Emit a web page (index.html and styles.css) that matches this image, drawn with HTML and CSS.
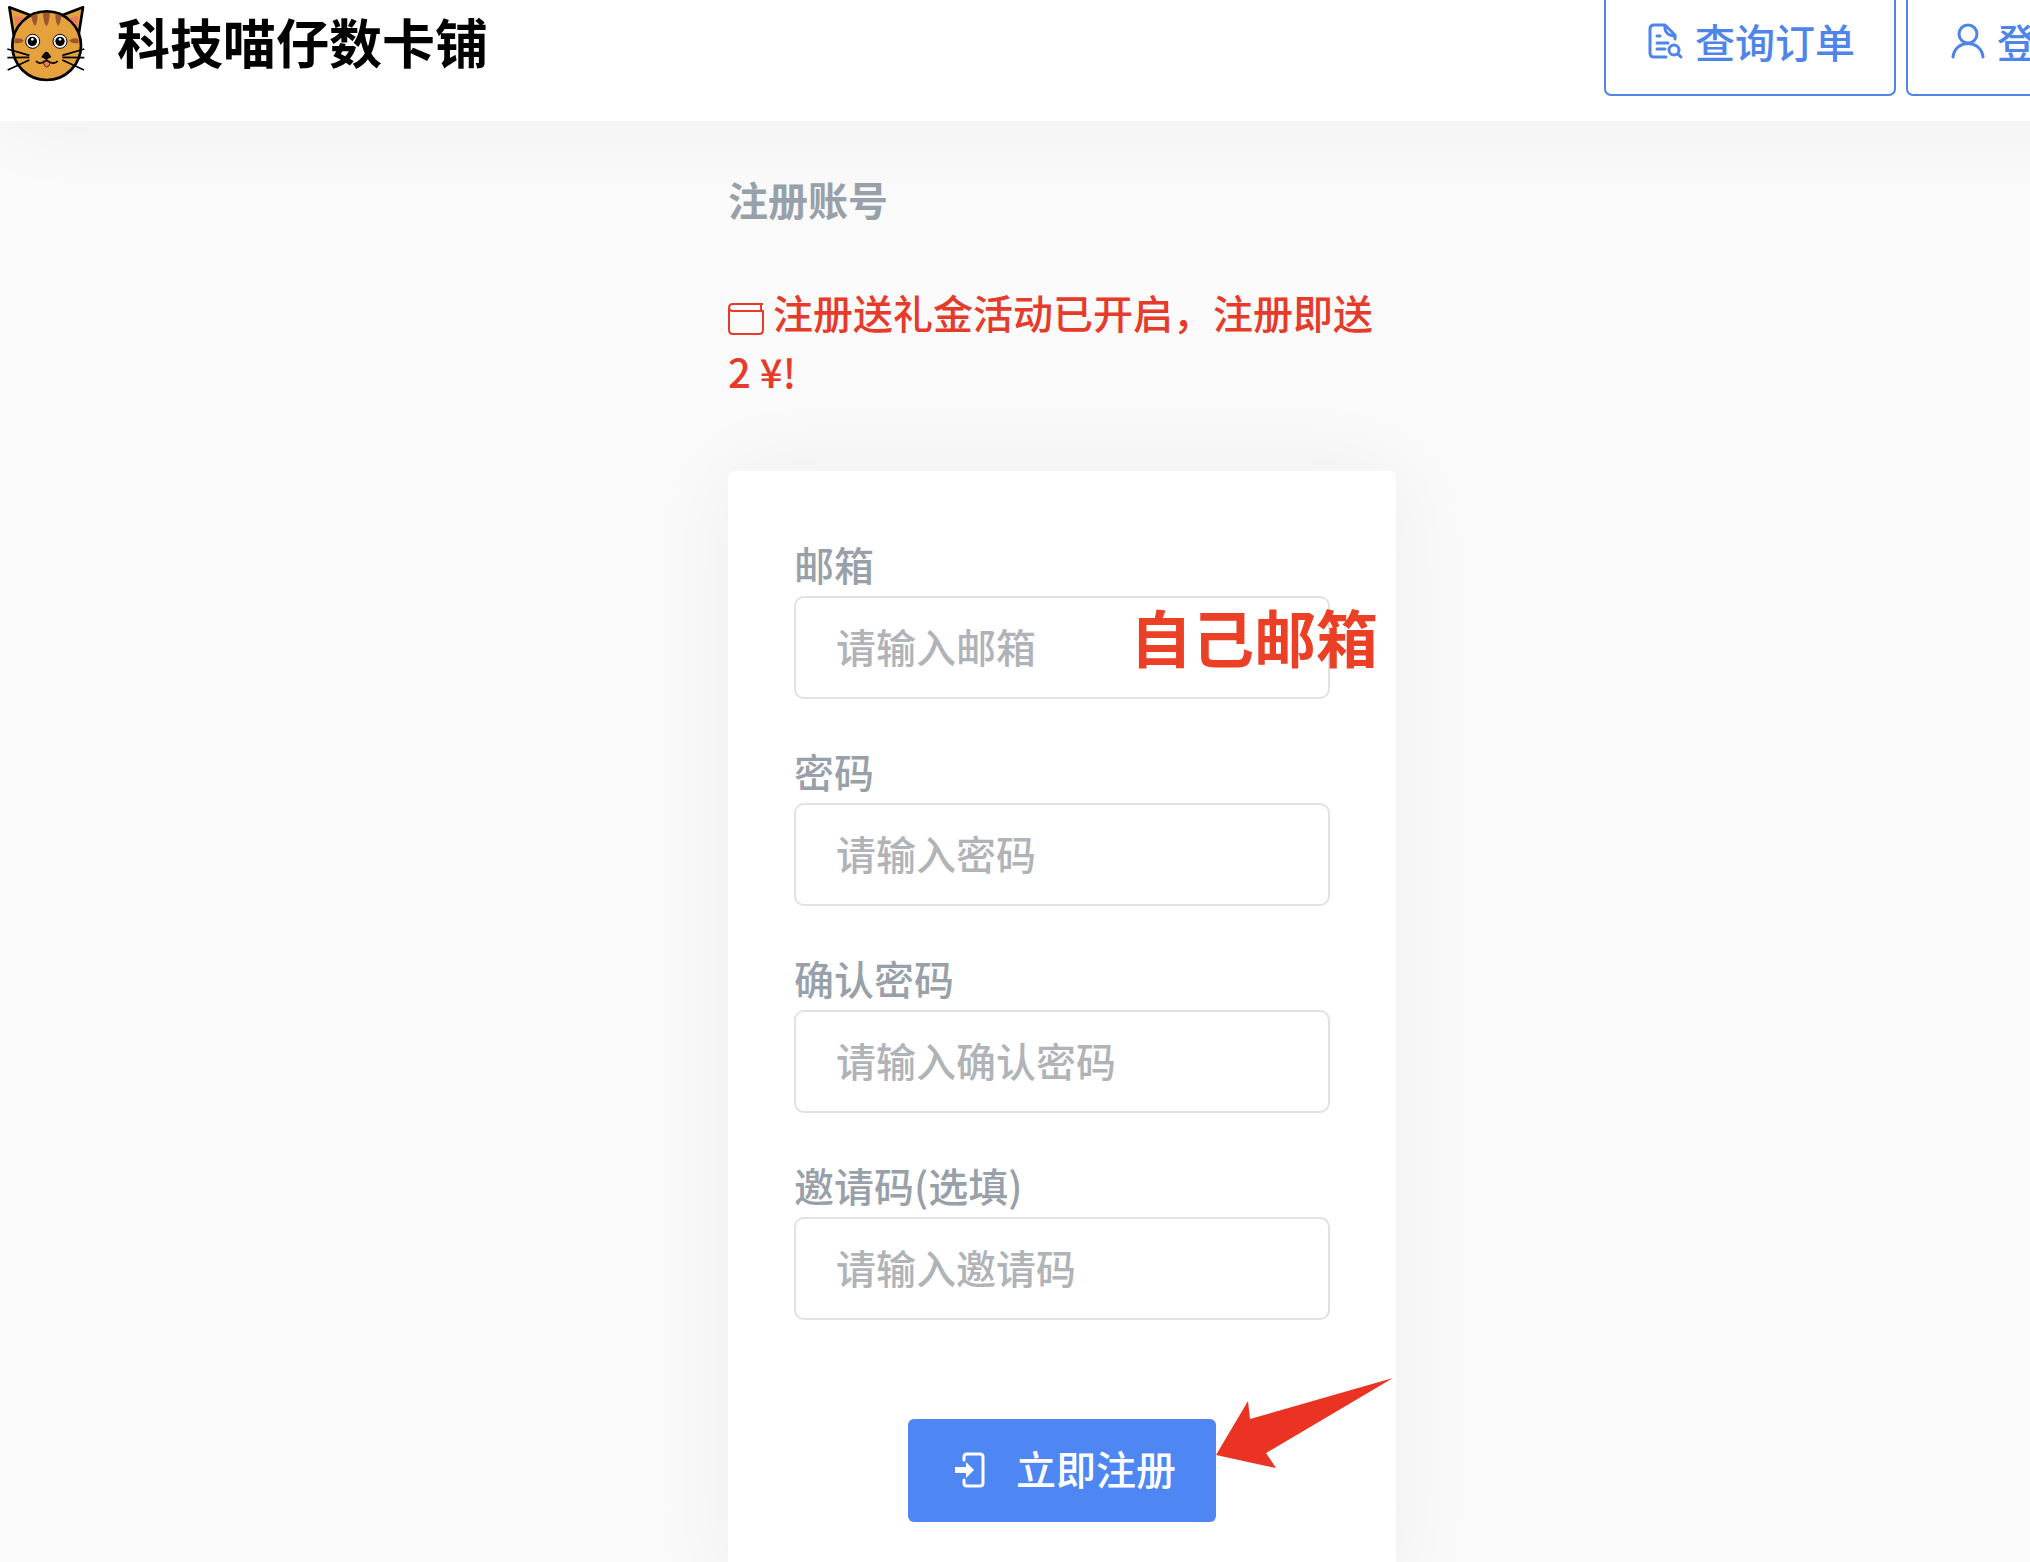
FILE: index.html
```html
<!DOCTYPE html>
<html lang="zh-CN">
<head>
    <meta charset="UTF-8">
    <meta name="viewport" content="width=device-width, initial-scale=1.0">
    <title>注册账号</title>
    <link rel="stylesheet" href="styles.css">
</head>
<body>
    <div class="page">
        <header class="topbar">
            <a class="brand" href="#">
                <svg class="logo" viewBox="18 12 237 237" aria-hidden="true">
                    <g stroke="#000" stroke-width="8" stroke-linejoin="round">
                        <path d="M41 104 L28 22 L92 46 Z" fill="#e5a13c"/>
                        <path d="M236 104 L249 22 L186 46 Z" fill="#e5a13c"/>
                        <circle cx="140" cy="137" r="103" fill="#e5a13c"/>
                    </g>
                    <path d="M43 47 L72 54 L46 78 Z" fill="#ee7b61"/>
                    <path d="M235 47 L206 54 L232 78 Z" fill="#ee7b61"/>
                    <g fill="#9c5530">
                        <path d="M94 47 L112 40 Q114 68 105 77 Q98 72 94 47 Z"/>
                        <path d="M129 38 L149 38 Q149 69 139 79 Q130 69 129 38 Z"/>
                        <path d="M166 40 L184 47 Q181 72 174 77 Q166 68 166 40 Z"/>
                        <path d="M44 116 Q62 112 72 122 Q62 132 43 129 Z"/>
                        <path d="M235 116 Q217 112 207 122 Q217 132 236 129 Z"/>
                    </g>
                    <g fill="#fff" stroke="#000" stroke-width="3">
                        <circle cx="98" cy="124" r="21"/>
                        <circle cx="180" cy="124" r="21"/>
                    </g>
                    <circle cx="97" cy="124" r="14"/>
                    <circle cx="180" cy="124" r="14"/>
                    <g fill="#fff">
                        <circle cx="97" cy="118" r="4"/>
                        <circle cx="180" cy="118" r="4"/>
                    </g>
                    <path d="M130 188 L140 180 L151 188 Q148 201 140 201 Q133 200 130 188 Z" fill="#ee7b61" stroke="#000" stroke-width="2"/>
                    <path d="M139 155 Q147 157 154 172 L144 176 L140 181 L134 176 L124 172 Q131 157 139 155 Z"/>
                    <path d="M108 183 Q115 192 126 188 L139 181 L153 188 Q166 192 173 183" fill="none" stroke="#000" stroke-width="5"/>
                    <path d="M22 147 L88 166 M22 173 L88 172 M23 210 L88 180 M253 147 L187 166 M253 173 L187 172 M252 210 L187 180" stroke="#000" stroke-width="5"/>
                </svg>
                <span class="brand-name">科技喵仔数卡铺</span>
            </a>
            <nav class="actions">
                <a class="btn-outline" href="#">
                    <svg class="icon" viewBox="0 0 40 40" aria-hidden="true">
                        <path d="M21 36 H9 Q5 36 5 32 V8 Q5 4 9 4 H20 L30 14 V18 M20 5 V8 Q21 14 29 15 M12 15 H15 M12 22 H23 M12 28 H20"/>
                        <circle cx="29" cy="29" r="5"/>
                        <path d="M33 33 L36 36"/>
                    </svg>
                    <span>查询订单</span>
                </a>
                <a class="btn-outline" href="#">
                    <svg class="icon" viewBox="0 0 40 40" aria-hidden="true">
                        <circle cx="21" cy="13" r="9"/>
                        <path d="M6 36 C8 18 34 18 36 36"/>
                    </svg>
                    <span>登录</span>
                </a>
            </nav>
        </header>

        <main class="register">
            <h1>注册账号</h1>
            <p class="notice">
                <svg class="notice-icon" viewBox="0 0 36 36" aria-hidden="true">
                    <path d="M35 3 H5 Q1 3 1 7 V29 Q1 33 5 33 H31 Q35 33 35 29 V10 H5 Q1 10 1 6 M33 3 V10"/>
                </svg>
                注册送礼金活动已开启，注册即送 2 ¥!
            </p>

            <form class="card">
                <div class="field">
                    <label for="email">邮箱</label>
                    <input type="email" id="email" placeholder="请输入邮箱">
                    <span class="mark">自己邮箱</span>
                </div>
                <div class="field">
                    <label for="password">密码</label>
                    <input type="password" id="password" placeholder="请输入密码">
                </div>
                <div class="field">
                    <label for="confirm">确认密码</label>
                    <input type="password" id="confirm" placeholder="请输入确认密码">
                </div>
                <div class="field">
                    <label for="invite">邀请码(选填)</label>
                    <input type="text" id="invite" placeholder="请输入邀请码">
                </div>
                <div class="submit-row">
                    <button type="submit" class="submit">
                        <svg class="icon" viewBox="0 0 40 40" aria-hidden="true">
                            <path d="M16 11 V8 Q16 5 19 5 H32 Q35 5 35 8 V34 Q35 37 32 37 H19 Q16 37 16 34 V31"/>
                            <path class="solid" d="M7 18 H18 V13 L26 21 L18 29 V24 H7 Z"/>
                        </svg>
                        <span>立即注册</span>
                    </button>
                    <svg class="arrow" viewBox="0 0 177 90" aria-hidden="true">
                        <path d="M0 77 L32 23 L34 41 L177 0 L50 75 L60 90 Z"/>
                    </svg>
                </div>
            </form>
        </main>
    </div>
</body>
</html>
```
FILE: styles.css
```css
* {
    box-sizing: border-box;
}
html {
    overflow-x: hidden;
}
body {
    margin: 0;
    background-color: #fafafa;
    color: #98a0a9;
    font-family: "Noto Sans CJK SC", sans-serif;
    font-size: 40px;
    font-weight: 500;
    line-height: 59px;
    overflow-x: hidden;
}
/* the page runs a little past the right edge of the window */
.page {
    width: calc(100% + 94px);
}
.topbar {
    display: flex;
    justify-content: space-between;
    align-items: center;
    height: 156px;
    margin-top: -35px;
    padding: 0 6px;
    background-color: #fff;
    box-shadow: 0 0 90px rgba(0, 0, 0, 0.05);
}
.brand {
    display: flex;
    align-items: center;
    gap: 32px;
    color: #000;
    font-size: 53px;
    font-weight: bold;
    text-decoration: none;
}
.brand-name {
    padding-bottom: 4px;
}
.logo {
    width: 79px;
    height: 79px;
}
.actions {
    display: flex;
    gap: 10px;
}
.btn-outline {
    display: flex;
    align-items: center;
    gap: 10px;
    height: 105px;
    padding: 0 39px 4px;
    border: 2px solid #4f85ea;
    border-radius: 7px;
    color: #4f85ea;
    text-decoration: none;
}
.icon {
    width: 40px;
    height: 40px;
    fill: none;
    stroke: currentColor;
    stroke-width: 3;
    stroke-linecap: round;
    stroke-linejoin: round;
}
.icon .solid {
    fill: currentColor;
    stroke: none;
}
.register {
    width: 668px;
    margin: 0 auto;
    padding: 49px 0;
}
h1 {
    margin: 0 0 54px;
    font-size: 40px;
}
.notice {
    margin: 0 0 70px;
    color: #e63a2a;
}
.notice-icon {
    width: 36px;
    height: 36px;
    vertical-align: -8px;
    fill: none;
    stroke: currentColor;
    stroke-width: 2;
}
.card {
    padding: 66px;
    background-color: #fff;
    border-radius: 8px;
    box-shadow: 0 0 90px rgba(0, 0, 0, 0.05);
}
.field {
    position: relative;
    margin-bottom: 45px;
}
.field label {
    display: block;
    line-height: 55px;
    padding-bottom: 4px;
}
.field input {
    display: block;
    width: 100%;
    height: 103px;
    padding: 0 40px 4px;
    border: 2px solid #e0e2e4;
    border-radius: 10px;
    background-color: #fff;
    color: #98a0a9;
    font: inherit;
}
.field input::placeholder {
    color: #b0b4b8;
}
.mark {
    position: absolute;
    top: 67px;
    right: -48px;
    color: #eb4026;
    font-size: 62px;
    font-weight: bold;
    line-height: 64px;
}
.submit-row {
    position: relative;
    width: 308px;
    margin: 99px auto 0;
}
.submit {
    display: flex;
    align-items: center;
    justify-content: center;
    gap: 28px;
    width: 100%;
    height: 103px;
    padding: 0 0 4px;
    border: none;
    border-radius: 6px;
    background-color: #4e86f4;
    color: #fff;
    font: inherit;
    cursor: pointer;
}
.arrow {
    position: absolute;
    top: -41px;
    left: 100%;
    width: 177px;
    height: 90px;
    fill: #ea3323;
}
```
